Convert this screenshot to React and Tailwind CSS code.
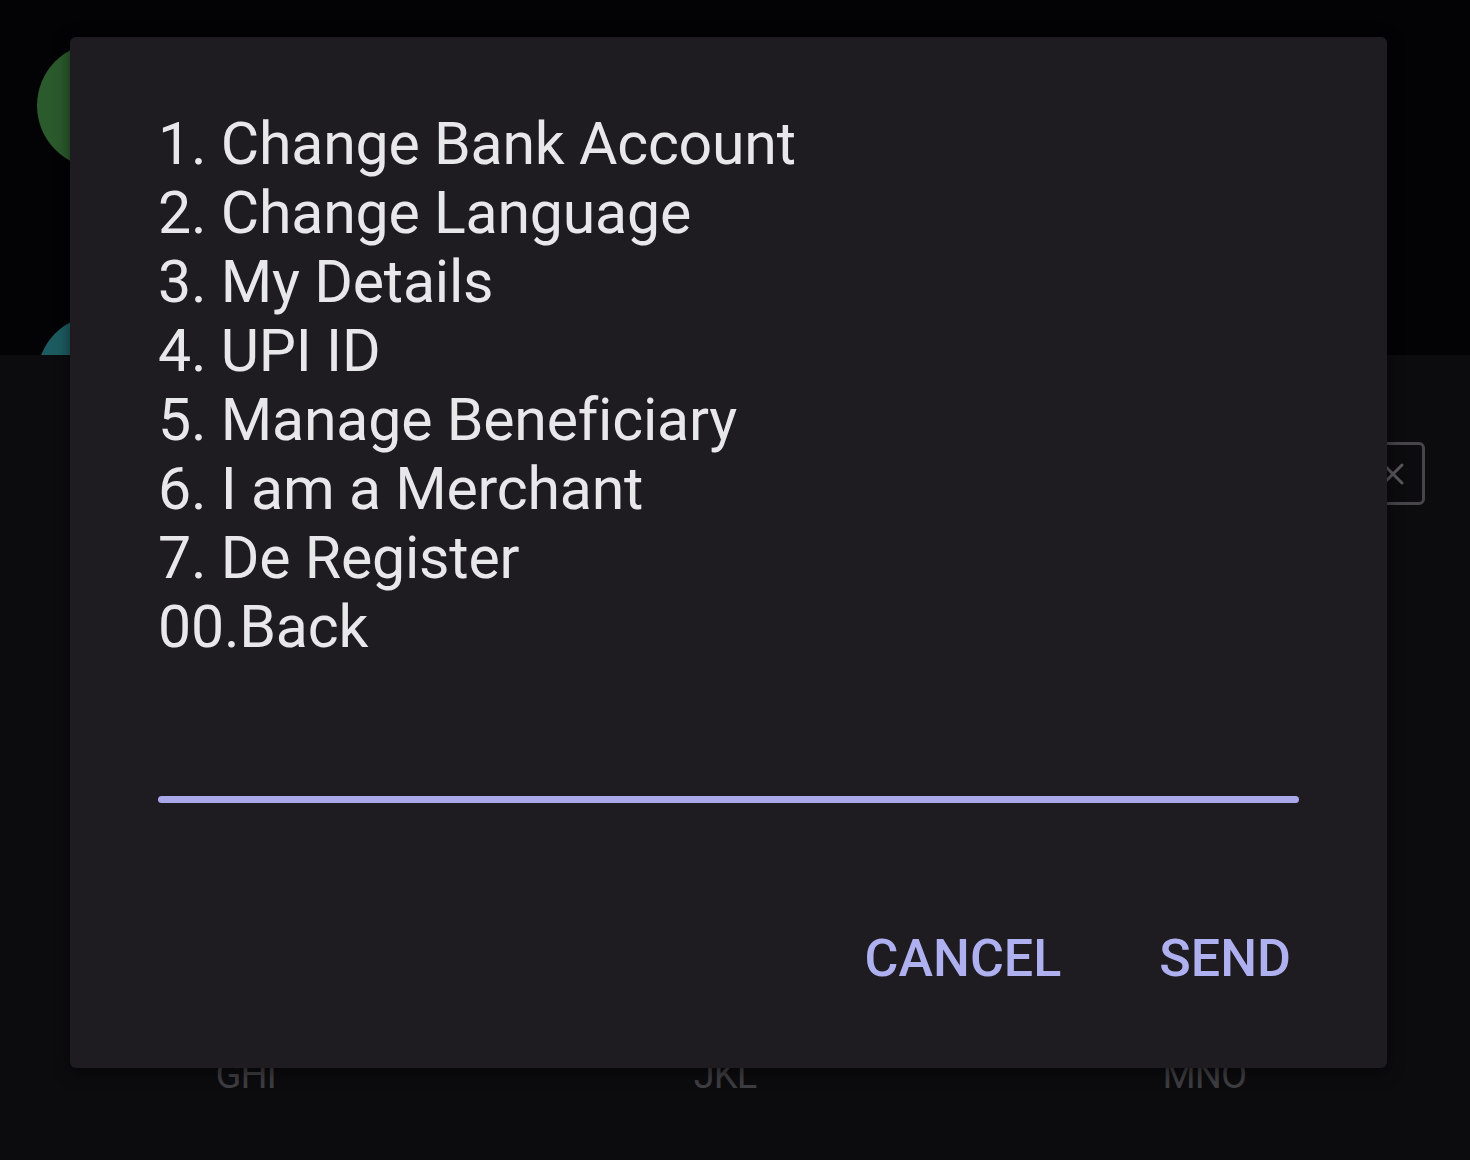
import { X } from 'lucide-react';

const menu = [
  '1. Change Bank Account',
  '2. Change Language',
  '3. My Details',
  '4. UPI ID',
  '5. Manage Beneficiary',
  '6. I am a Merchant',
  '7. De Register',
  '00.Back',
];

export default function App() {
  return (
    <div className="relative w-[1470px] h-[1160px] overflow-hidden bg-[#0c0b0e] font-['Roboto',sans-serif]">
      {/* background screen */}
      <div className="h-[355px] overflow-hidden bg-[#030204] flex flex-col pl-[37px] pt-[43px] gap-[147px]">
        <div className="shrink-0 w-[125px] h-[125px] rounded-full bg-[#2b5a2c]" />
        <div className="shrink-0 w-[125px] h-[125px] rounded-full bg-[#1c5c60]" />
      </div>

      <div className="flex justify-end pr-[45px] pt-[87px]">
        <div className="w-[64px] h-[63px] rounded-[6px] border-[3px] border-[#47454a] flex items-center justify-center">
          <X className="w-9 h-9 text-[#58565a]" strokeWidth={2} />
        </div>
      </div>

      <div className="grid grid-cols-3 pl-[6px] pr-[26px] pt-[551px] text-[38px] leading-none text-[#3e3d41] tracking-[-1px]">
        <div className="text-center">GHI</div>
        <div className="text-center">JKL</div>
        <div className="text-center">MNO</div>
      </div>

      {/* USSD dialog */}
      <div className="absolute left-[70px] top-[37px] w-[1317px] h-[1031px] rounded-[6px] bg-[#1e1c20] shadow-[0_4px_16px_rgba(0,0,0,0.5)] flex flex-col pl-[88px] pr-[88px]">
        <div className="pt-[72px] text-[59px] leading-[69px] text-[#e8e7ea] tracking-[-0.2px]">
          {menu.map((m) => (
            <div key={m}>{m}</div>
          ))}
        </div>
        <div className="mt-[135px] h-[7px] rounded-full bg-[#a9a8ea]" />
        <div className="flex justify-end gap-[98px] pt-[130px] pr-[8px] text-[52px] font-medium leading-none text-[#aeb0f0]">
          <span>CANCEL</span>
          <span>SEND</span>
        </div>
      </div>
    </div>
  );
}
